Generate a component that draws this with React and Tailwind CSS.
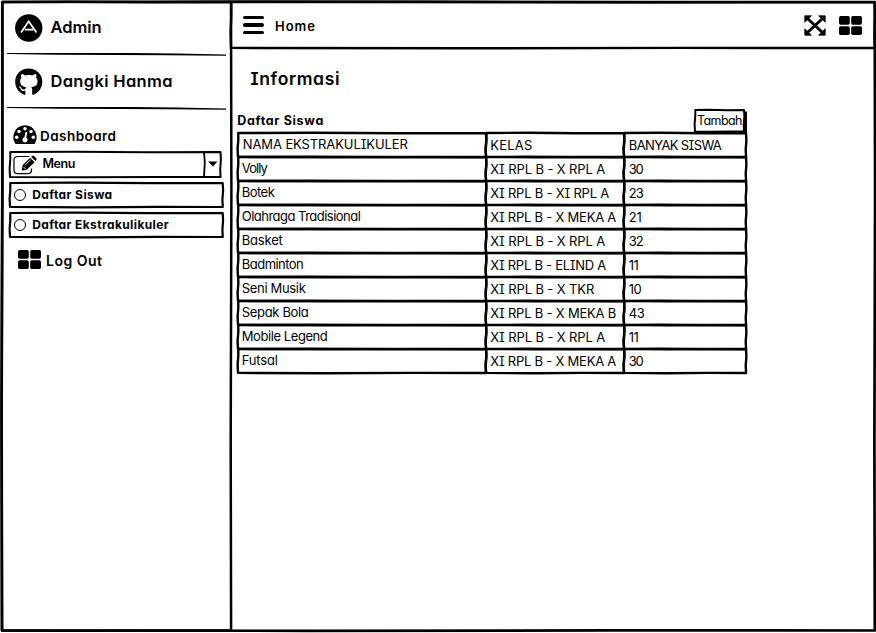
import { useLayoutEffect, useRef, useState } from "react";
import { FaGithub } from "react-icons/fa";

// Text spaced so that it spans a given width in pixels.
function Label({ children, width, className = "" }) {
  const ref = useRef(null);
  const [spacing, setSpacing] = useState(0);
  useLayoutEffect(() => {
    const natural = ref.current.getBoundingClientRect().width;
    setSpacing((width - natural) / (children.length - 1));
  }, []);
  return (
    <span
      ref={ref}
      className={`inline-block shrink-0 whitespace-nowrap ${className}`}
      style={{ letterSpacing: `${spacing}px` }}
    >
      {children}
    </span>
  );
}

// Hand-drawn outline running along the edges of its box.
function Frame({ w, h, stroke = 2.4 }) {
  const d = `M0.3 0 L${w * 0.3} -0.3 L${w * 0.65} 0.2 L${w} 0.1 L${w + 0.4} ${h * 0.3} L${w - 0.3} ${h * 0.7} L${w + 0.1} ${h} L${w * 0.7} ${h - 0.1} L${w * 0.35} ${h + 0.3} L0 ${h - 0.1} L-0.4 ${h * 0.65} L0.3 ${h * 0.3} Z`;
  return (
    <svg className="pointer-events-none absolute left-0 top-0 overflow-visible" width={w} height={h} fill="none" stroke="black" strokeWidth={stroke} strokeLinejoin="round">
      <path d={d} />
    </svg>
  );
}

function Rule() {
  return (
    <svg className="ml-[5px] block h-[4px] w-[219px] shrink-0" viewBox="0 0 219 4">
      <path d="M0 0 L50 -0.1 L118 -0.1 L170 0.6 L219 1.4 L219 2.7 L160 2.3 L110 1.9 L50 1.7 L0 0.9 Z" />
    </svg>
  );
}

function Grid({ className }) {
  return (
    <svg className={className} viewBox="0 0 23 19">
      <rect x="0" y="0" width="10.8" height="8.8" rx="1.7" />
      <rect x="12.2" y="0" width="10.8" height="8.8" rx="1.7" />
      <rect x="0" y="10.2" width="10.8" height="8.8" rx="1.7" />
      <rect x="12.2" y="10.2" width="10.8" height="8.8" rx="1.7" />
    </svg>
  );
}

function CircleA() {
  return (
    <svg className="h-[28px] w-[27.5px]" viewBox="0 0 28 28">
      <circle cx="14" cy="14" r="13.9" />
      <path d="M6.2 18.6 14 7.2 21.8 18.6M10 15.6H18.4" fill="none" stroke="white" strokeWidth="1.8" />
    </svg>
  );
}

function Gauge() {
  return (
    <svg className="h-[20px] w-[24px]" viewBox="0 0 24 20">
      <path d="M12 0.3A11.8 11.8 0 0 0 2.2 18.4Q2.5 19 3.3 19H20.7Q21.5 19 21.8 18.4A11.8 11.8 0 0 0 12 0.3Z" />
      <g fill="white">
        <circle cx="12" cy="3.8" r="1.75" />
        <circle cx="6" cy="6.4" r="1.75" />
        <circle cx="18" cy="6.4" r="1.75" />
        <circle cx="3.7" cy="12.2" r="1.75" />
        <circle cx="20.3" cy="12.2" r="1.75" />
        <path d="M12.6 6.8 14.2 7.2 13.3 12.6A2.6 2.6 0 1 1 11.4 12.3Z" />
      </g>
    </svg>
  );
}

function Expand() {
  return (
    <svg className="h-[21px] w-[22px]" viewBox="0 0 22 21">
      <path d="M4 4 18 17M18 4 4 17" stroke="black" strokeWidth="3" />
      <path d="M0.8 0.8H7.4L0.8 7.2ZM21.2 0.8H14.6L21.2 7.2ZM0.8 20.2H7.4L0.8 13.8ZM21.2 20.2H14.6L21.2 13.8Z" stroke="black" strokeWidth="0.8" strokeLinejoin="round" />
    </svg>
  );
}

function Edit() {
  return (
    <svg className="h-[20px] w-[25px] overflow-visible" viewBox="0 0 25 20">
      <path d="M16.5 1.5H5Q1 1.5 1 5V15Q1 18.7 5 18.7H14.5Q18.5 18.7 18.5 15V13.4" fill="none" stroke="black" strokeWidth="1.2" />
      <path d="M8.8 15.8 9.5 10.2 17.2 2.8 21.5 7.2 13.8 14.8ZM18.2 2 19.3 0.9Q20.2 0.3 21 1L23.3 3.2Q24 4 23.3 4.9L22.4 6.1Z" />
      <path d="M12.2 10 17.8 4.6M10.4 11.8 12.6 14.1" stroke="white" strokeWidth="0.9" />
    </svg>
  );
}

const rows = [
  ["Volly", 26, "XI RPL B - X RPL A", 115, "30", 15],
  ["Botek", 33, "XI RPL B - XI RPL A", 119, "23", 15],
  ["Olahraga Tradisional", 119, "XI RPL B - X MEKA A", 126, "21", 13],
  ["Basket", 41, "XI RPL B - X RPL A", 115, "32", 15],
  ["Badminton", 62, "XI RPL B - ELIND A", 116, "11", 10],
  ["Seni Musik", 64, "XI RPL B - X TKR", 104, "10", 13],
  ["Sepak Bola", 67, "XI RPL B - X MEKA B", 126, "43", 16],
  ["Mobile Legend", 86, "XI RPL B - X RPL A", 115, "11", 10],
  ["Futsal", 36, "XI RPL B - X MEKA A", 126, "30", 15],
];

function Row({ data, head }) {
  const [a, aw, b, bw, c, cw] = data;
  return (
    <div className="flex h-[24px]">
      <div className={`relative flex w-[248px] items-center ${head ? "pl-[4.5px]" : "pl-[3.5px]"}`}>
        <Frame w={248} h={24} />
        <Label width={aw}>{a}</Label>
      </div>
      <div className="relative flex w-[138px] items-center pl-[4px] pt-[1px]">
        <Frame w={138} h={24} />
        <Label width={bw}>{b}</Label>
      </div>
      <div className="relative flex w-[122px] items-center pl-[4.5px] pt-[1px]">
        <Frame w={122} h={24} />
        <Label width={cw}>{c}</Label>
      </div>
    </div>
  );
}

export default function App() {
  return (
    <div className="h-[633px] w-[876px] overflow-hidden bg-white pl-[1.5px] pt-[2px] font-['Inter','Open_Sans',sans-serif] leading-none text-black [font-feature-settings:'cv11','cv08']">
      <div className="relative flex h-[628.5px] w-[872.7px]">
        <Frame w={872.7} h={628.5} stroke={2.7} />
        <aside className="relative flex h-full w-[229px] shrink-0 flex-col">
          <Frame w={229} h={628.5} stroke={2.5} />
          <div className="flex h-[51px] items-center pl-[13.5px]">
            <CircleA />
            <Label width={51} className="ml-[8px] pb-px text-[16.5px] font-semibold">Admin</Label>
          </div>
          <Rule />
          <div className="flex h-[50px] items-center pb-px pl-[13.5px]">
            <FaGithub className="h-[28px] w-[27.5px]" />
            <Label width={122} className="ml-[8px] pb-px text-[16.5px] font-semibold">Dangki Hanma</Label>
          </div>
          <Rule />
          <div className="mt-[11px] flex h-[26px] items-center pl-[11.5px]">
            <Gauge />
            <Label width={76} className="ml-[3px] pt-[2.5px] text-[13.5px] font-semibold">Dashboard</Label>
          </div>
          <div className="relative ml-[8.5px] mt-[4px] flex h-[25px] w-[210.5px] items-center">
            <Frame w={210.5} h={25} stroke={2} />
            <div className="ml-[3px] flex h-full w-[190px] items-center pt-px">
              <Edit />
              <Label width={33} className="mb-[2.5px] ml-[4.5px] text-[12.5px] font-semibold">Menu</Label>
            </div>
            <svg className="h-[25px] w-[17px]" viewBox="0 0 17 25">
              <path d="M1 0 1.8 10 1 25" fill="none" stroke="black" strokeWidth="1.8" />
              <path d="M5 9.6H14.5L10 14.6Z" />
            </svg>
          </div>
          <div className="relative ml-[8px] mt-[6px] flex h-[24px] w-[212.7px] items-center pl-[4.7px]">
            <Frame w={212.7} h={24} stroke={2.2} />
            <span className="h-[11.5px] w-[11.5px] rounded-full border border-black" />
            <Label width={80} className="ml-[6.5px] text-[12px] font-bold">Daftar Siswa</Label>
          </div>
          <div className="relative ml-[8px] mt-[6px] flex h-[24px] w-[212.7px] items-center pl-[4.7px]">
            <Frame w={212.7} h={24} stroke={2.2} />
            <span className="h-[11.5px] w-[11.5px] rounded-full border border-black" />
            <Label width={136.5} className="ml-[6.5px] text-[12px] font-bold">Daftar Ekstrakulikuler</Label>
          </div>
          <div className="mt-[9.5px] flex h-[26px] items-center pl-[16.5px]">
            <Grid className="h-[19px] w-[23px]" />
            <Label width={56} className="ml-[5px] pt-[2px] text-[14px] font-semibold">Log Out</Label>
          </div>
        </aside>
        <main className="flex min-w-0 flex-1 flex-col">
          <header className="relative flex h-[46px] w-[643.7px] shrink-0 items-center pl-[12.5px]">
            <Frame w={643.7} h={46} stroke={2.4} />
            <div className="flex w-[21px] flex-col gap-[4px]">
              <span className="h-[3.5px] rounded-sm bg-black" />
              <span className="h-[3.5px] rounded-sm bg-black" />
              <span className="h-[3.5px] rounded-sm bg-black" />
            </div>
            <Label width={40} className="ml-[11px] pt-[2px] text-[13px] font-semibold">Home</Label>
            <div className="ml-auto flex items-center gap-[13px] pr-[12px] pt-px">
              <Expand />
              <Grid className="h-[19px] w-[23px]" />
            </div>
          </header>
          <h1 className="ml-[20px] mt-[21px] flex h-[20px] items-center">
            <Label width={89} className="text-[17.5px] font-semibold">Informasi</Label>
          </h1>
          <section className="ml-[7.8px] mt-[20px] w-[508px] text-[13px]">
            <div className="flex h-[23.7px] justify-between">
              <h2 className="-ml-px flex h-[22px] items-center pt-[3px]">
                <Label width={86} className="text-[12.5px] font-bold">Daftar Siswa</Label>
              </h2>
              <div className="relative mr-[2.3px] mt-[1px] flex h-[21.5px] w-[49px] items-center bg-white pl-[2px] shadow-[3px_1.5px_0_black]">
                <Frame w={49} h={21.5} stroke={2} />
                <Label width={45.5} className="text-[12.5px]">Tambah</Label>
              </div>
            </div>
            <Row head data={["NAMA EKSTRAKULIKULER", 165, "KELAS", 42, "BANYAK SISWA", 93]} />
            {rows.map((r) => (
              <Row key={r[0]} data={r} />
            ))}
          </section>
        </main>
      </div>
    </div>
  );
}
